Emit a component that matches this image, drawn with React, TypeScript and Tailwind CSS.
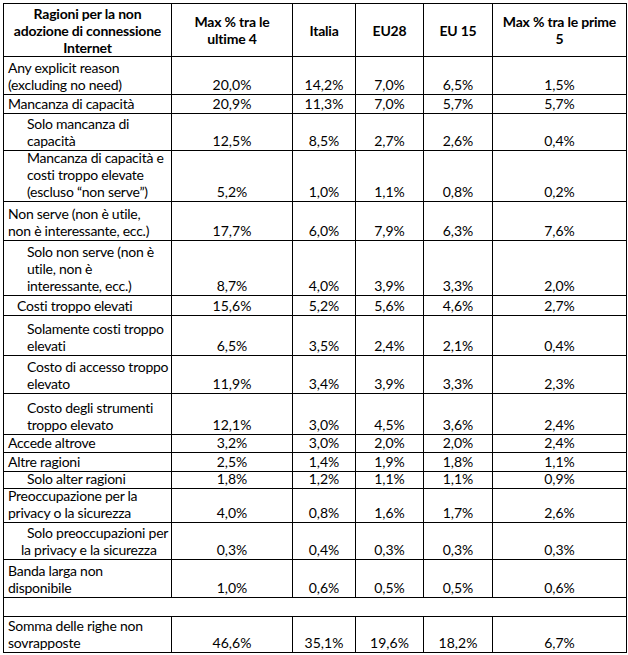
import React from "react";

type Line = { t: string; i?: number };
type Row = { h: number; label: Line[]; vals: string[] };

const rows: Row[] = [
  { h: 37, label: [{ t: "Any explicit reason" }, { t: "(excluding no need)" }], vals: ["20,0%", "14,2%", "7,0%", "6,5%", "1,5%"] },
  { h: 18, label: [{ t: "Mancanza di capacità" }], vals: ["20,9%", "11,3%", "7,0%", "5,7%", "5,7%"] },
  { h: 36, label: [{ t: "Solo mancanza di", i: 19 }, { t: "capacità", i: 19 }], vals: ["12,5%", "8,5%", "2,7%", "2,6%", "0,4%"] },
  { h: 50, label: [{ t: "Mancanza di capacità e", i: 19 }, { t: "costi troppo elevate", i: 19 }, { t: "(escluso “non serve”)", i: 19 }], vals: ["5,2%", "1,0%", "1,1%", "0,8%", "0,2%"] },
  { h: 38, label: [{ t: "Non serve (non è utile," }, { t: "non è interessante, ecc.)" }], vals: ["17,7%", "6,0%", "7,9%", "6,3%", "7,6%"] },
  { h: 54, label: [{ t: "Solo non serve (non è", i: 19 }, { t: "utile, non è", i: 19 }, { t: "interessante, ecc.)", i: 19 }], vals: ["8,7%", "4,0%", "3,9%", "3,3%", "2,0%"] },
  { h: 19, label: [{ t: "Costi troppo elevati", i: 9 }], vals: ["15,6%", "5,2%", "5,6%", "4,6%", "2,7%"] },
  { h: 39, label: [{ t: "Solamente costi troppo", i: 19 }, { t: "elevati", i: 19 }], vals: ["6,5%", "3,5%", "2,4%", "2,1%", "0,4%"] },
  { h: 37, label: [{ t: "Costo di accesso troppo", i: 19 }, { t: "elevato", i: 19 }], vals: ["11,9%", "3,4%", "3,9%", "3,3%", "2,3%"] },
  { h: 40, label: [{ t: "Costo degli strumenti", i: 19 }, { t: "troppo elevato", i: 19 }], vals: ["12,1%", "3,0%", "4,5%", "3,6%", "2,4%"] },
  { h: 17, label: [{ t: "Accede altrove" }], vals: ["3,2%", "3,0%", "2,0%", "2,0%", "2,4%"] },
  { h: 18, label: [{ t: "Altre ragioni" }], vals: ["2,5%", "1,4%", "1,9%", "1,8%", "1,1%"] },
  { h: 16, label: [{ t: "Solo alter ragioni", i: 19 }], vals: ["1,8%", "1,2%", "1,1%", "1,1%", "0,9%"] },
  { h: 33, label: [{ t: "Preoccupazione per la" }, { t: "privacy o la sicurezza" }], vals: ["4,0%", "0,8%", "1,6%", "1,7%", "2,6%"] },
  { h: 36, label: [{ t: "Solo preoccupazioni per", i: 19 }, { t: "la privacy e la sicurezza", i: 13 }], vals: ["0,3%", "0,4%", "0,3%", "0,3%", "0,3%"] },
  { h: 37, label: [{ t: "Banda larga non" }, { t: "disponibile" }], vals: ["1,0%", "0,6%", "0,5%", "0,5%", "0,6%"] },
];

const last: Row = { h: 35, label: [{ t: "Somma delle righe non" }, { t: "sovrapposte" }], vals: ["46,6%", "35,1%", "19,6%", "18,2%", "6,7%"] };

const font = { fontFamily: "Lato, 'Open Sans', sans-serif" };

function Label({ lines }: { lines: Line[] }) {
  return (
    <div className="bg-white flex flex-col justify-end pb-[1px] tracking-[-0.25px]">
      {lines.map((l, k) => (
        <div key={k} className="whitespace-nowrap" style={{ paddingLeft: 4 + (l.i ?? 0) }}>
          {l.t}
        </div>
      ))}
    </div>
  );
}

function Val({ v }: { v: string }) {
  return <div className="bg-white flex items-end justify-center pb-[1px]">{v}</div>;
}

function Head({ lines }: { lines: string[] }) {
  return (
    <div className="bg-white flex flex-col items-center justify-center font-bold text-center tracking-[-0.2px]">
      {lines.map((l, k) => (
        <div key={k} className="whitespace-nowrap">{l}</div>
      ))}
    </div>
  );
}

export default function App() {
  const heights = [52, ...rows.map((r) => r.h), 18, last.h];
  return (
    <div className="w-[628px] h-[655px] bg-white pt-[3px] pl-[3px]" style={font}>
      <div
        className="grid w-[624px] gap-px bg-black p-px text-[14px] leading-[17px] text-black"
        style={{
          gridTemplateColumns: "167px 120px 62px 67px 68px 133px",
          gridTemplateRows: heights.map((h) => h + "px").join(" "),
        }}
      >
        <Head lines={["Ragioni per la non", "adozione di connessione", "Internet"]} />
        <Head lines={["Max % tra le", "ultime 4"]} />
        <Head lines={["Italia"]} />
        <Head lines={["EU28"]} />
        <Head lines={["EU 15"]} />
        <Head lines={["Max % tra le prime", "5"]} />
        {rows.map((r, i) => (
          <React.Fragment key={i}>
            <Label lines={r.label} />
            {r.vals.map((v, j) => (
              <Val key={j} v={v} />
            ))}
          </React.Fragment>
        ))}
        <div className="bg-white col-span-6" />
        <Label lines={last.label} />
        {last.vals.map((v, j) => (
          <Val key={j} v={v} />
        ))}
      </div>
    </div>
  );
}
